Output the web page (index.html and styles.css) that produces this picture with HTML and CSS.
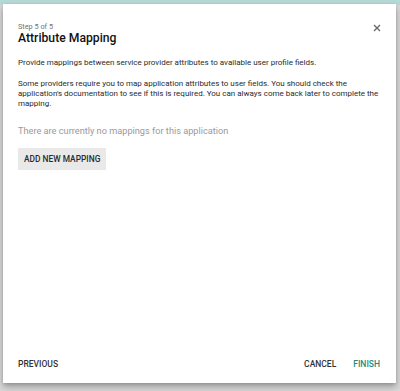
FILE: index.html
```html
<!DOCTYPE html>
<html>
<head>
<title>Attribute Mapping</title>
<link rel="stylesheet" href="styles.css">
</head>
<body>
  <div class="dialog">
    <div class="dialog-head">
      <div>
        <div class="step">Step 5 of 5</div>
        <h1>Attribute Mapping</h1>
      </div>
      <button class="close" aria-label="Close">
        <svg width="8" height="8" viewBox="0 0 8 8"><path d="M1 1L7 7M7 1L1 7" stroke="#666" stroke-width="1.3"/></svg>
      </button>
    </div>
    <div class="dialog-body">
      <p>Provide mappings between service provider attributes to available user profile fields.</p>
      <p>Some providers require you to map application attributes to user fields. You should check the application's documentation to see if this is required. You can always come back later to complete the mapping.</p>
      <div class="empty">There are currently no mappings for this application</div>
      <button class="add-btn">ADD NEW MAPPING</button>
    </div>
    <div class="dialog-foot">
      <button class="flat">PREVIOUS</button>
      <div class="right">
        <button class="flat">CANCEL</button>
        <button class="flat primary">FINISH</button>
      </div>
    </div>
  </div>
</body>
</html>
```

FILE: styles.css
```css
* {
  margin: 0;
  padding: 0;
  box-sizing: border-box;
  font-family: Roboto, "Liberation Sans", sans-serif;
}
body {
  background: linear-gradient(#b6d9d6 0, #b6d9d6 5px, #d9d9d9 5px);
  padding: 4px 4px 8px 3px;
  height: 391px;
  overflow: hidden;
}
.dialog {
  background: #fff;
  height: 379px;
  display: flex;
  flex-direction: column;
  box-shadow: 0 4px 7px rgba(0, 0, 0, 0.28), 0 1px 3px rgba(0, 0, 0, 0.12);
}
.dialog-head {
  display: flex;
  justify-content: space-between;
  align-items: flex-start;
  padding: 18px 13px 0 15px;
}
.step {
  font-size: 7.3px;
  color: #737373;
  line-height: 10px;
}
h1 {
  font-size: 12.2px;
  font-weight: 500;
  color: #111;
  line-height: 13px;
}
.close {
  border: 0;
  background: none;
  width: 12px;
  height: 12px;
  display: flex;
  align-items: center;
  justify-content: center;
}
.dialog-body {
  flex-grow: 1;
  padding: 13px 12px 0 15px;
  font-size: 8px;
  line-height: 10px;
  color: #2a2a2a;
}
.dialog-body p {
  margin-bottom: 11px;
}
.empty {
  font-size: 9.2px;
  color: #9a9a9a;
  margin-top: 16px;
  line-height: 12px;
}
.add-btn {
  margin-top: 11px;
  background: #e9e9e9;
  border: 0;
  height: 22px;
  padding: 0 6px;
  font-size: 8.4px;
  font-weight: 500;
  color: #2b2b2b;
}
.dialog-foot {
  display: flex;
  justify-content: space-between;
  align-items: center;
  padding: 0 16px 14px 15px;
}
.dialog-foot .right {
  display: flex;
  gap: 17px;
}
.flat {
  border: 0;
  background: none;
  font-size: 8.5px;
  font-weight: 500;
  color: #333;
  line-height: 10px;
}
.flat.primary {
  color: #1b8b80;
}
```
